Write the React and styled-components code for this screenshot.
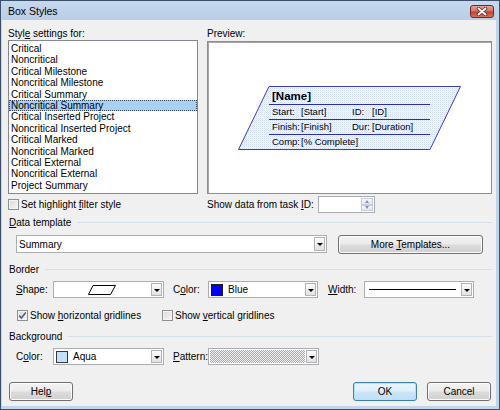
import React from 'react';
import styled, { createGlobalStyle, css } from 'styled-components';

const GlobalStyle = createGlobalStyle`
  html, body { margin: 0; padding: 0; background: #fff; }
  body {
    font-family: "Liberation Sans", Arial, sans-serif;
    font-size: 10px;
    color: #000;
  }
`;

const Window = styled.div`
  width: 500px;
  height: 410px;
  box-sizing: border-box;
  border: 1px solid #3a506b;
  background: #c2d5eb;
  padding: 0 3px 3px 1px;
  display: flex;
  flex-direction: column;
`;

const TitleBar = styled.div`
  height: 19px;
  display: flex;
  align-items: center;
  justify-content: space-between;
  padding: 0 2px 0 6px;
  background: linear-gradient(#c6d8ee, #b9cee7);
`;

const Title = styled.div`
  font-size: 10.5px;
  color: #000;
`;

const CloseButton = styled.div`
  width: 24px;
  height: 13px;
  margin-top: 2px;
  box-sizing: border-box;
  border: 1px solid #6b2b22;
  border-radius: 3px;
  background: linear-gradient(#e3a497 0%, #d27464 45%, #c0432f 55%, #d0785f 100%);
  display: flex;
  align-items: center;
  justify-content: center;
`;

const Body = styled.div`
  flex: 1;
  background: #f0f0f0;
  padding: 7px 4px 0 6px;
  display: flex;
  flex-direction: column;
`;

const TwoCols = styled.div`
  display: grid;
  grid-template-columns: 190px 285px;
  column-gap: 9px;
  margin-top: ${p => p.$mt || 0}px;
  height: ${p => p.$h}px;
`;

const Label = styled.div`
  line-height: 13px;
  white-space: nowrap;
  width: ${p => (p.$w ? `${p.$w}px` : 'auto')};
  padding-left: ${p => p.$pl || 0}px;
  box-sizing: border-box;
  flex-shrink: 0;
`;

const ListBox = styled.div`
  box-sizing: border-box;
  height: 154px;
  border: 1px solid #828790;
  background: #fff;
  padding: 2px 0;
`;

const ListItem = styled.div`
  height: 11.42px;
  line-height: 11.42px;
  padding-left: 2px;
  white-space: nowrap;
  ${p => p.$selected && css`
    background: #a9cff1;
    outline: 1px dotted #33475f;
    outline-offset: -1px;
  `}
`;

const Preview = styled.div`
  box-sizing: border-box;
  height: 153px;
  margin-top: 1px;
  border: 1px solid #8f8f8f;
  box-shadow: inset 1px 1px 0 #a6a6a6;
  background: #fff;
  display: flex;
  align-items: center;
  justify-content: center;
`;

const Node = styled.div`
  position: relative;
  width: 223px;
  height: 64px;
  margin-top: 1px;
`;

const NodeShape = styled.svg`
  position: absolute;
  inset: 0;
`;

const NodeFields = styled.div`
  position: relative;
  display: grid;
  grid-template-columns: 28px 50px 19px auto;
  grid-template-rows: 18px repeat(3, 15px);
  column-gap: 1px;
  padding-left: 34px;
  align-items: center;
  white-space: nowrap;
  font-size: 9.5px;
`;

const NodeName = styled.div`
  grid-column: 1 / -1;
  font-weight: bold;
  font-size: 11.5px;
  margin-top: 1px;
`;

const NodeWide = styled.span`
  grid-column: 2 / -1;
`;

const Row = styled.div`
  display: flex;
  align-items: center;
  margin-top: ${p => p.$mt || 0}px;
  height: ${p => p.$h}px;
  padding-left: ${p => p.$pl || 0}px;
  gap: ${p => p.$gap || 0}px;
`;

const CheckBox = styled.span`
  width: 11px;
  height: 11px;
  box-sizing: border-box;
  border: 1px solid #8e8f8f;
  background: linear-gradient(135deg, #d8d8d8, #f7f7f7);
  box-shadow: inset 0 0 0 1px #f4f4f4;
  display: inline-flex;
  align-items: center;
  justify-content: center;
  flex-shrink: 0;
  margin-right: 2px;
`;

const CheckLabel = styled.label`
  display: flex;
  align-items: center;
  width: ${p => (p.$w ? `${p.$w}px` : 'auto')};
  white-space: nowrap;
`;

const GroupHeader = styled.div`
  display: flex;
  align-items: center;
  height: 13px;
  margin-top: ${p => p.$mt}px;
  padding-left: 1px;
  &::after {
    content: '';
    flex: 1;
    height: 1px;
    margin-left: 6px;
    background: #d5dfe5;
  }
`;

const Combo = styled.div`
  width: ${p => p.$w}px;
  height: ${p => p.$h || 17}px;
  box-sizing: border-box;
  border: 1px solid #abadb3;
  background: #fff;
  display: flex;
  align-items: center;
  flex-shrink: 0;
`;

const ComboValue = styled.div`
  flex: 1;
  min-width: 0;
  height: 100%;
  display: flex;
  align-items: center;
  justify-content: ${p => (p.$center ? 'center' : 'flex-start')};
  gap: 5px;
  padding: 0 ${p => p.$px ?? 2}px;
  ${p => p.$pattern && css`
    margin: 1px 0 1px 1px;
    height: auto;
    align-self: stretch;
    background: repeating-conic-gradient(#a8a8a8 0 25%, #f2f2f2 0 50%) 0 0 / 2px 2px;
  `}
`;

const DropButton = styled.div`
  width: 11px;
  height: ${p => p.$h || 13}px;
  margin: 0 1px;
  box-sizing: border-box;
  border: 1px solid #b3b3b3;
  background: linear-gradient(#fbfbfb, #e2e2e2);
  display: flex;
  align-items: center;
  justify-content: center;
  &::after {
    content: '';
    border-left: 3px solid transparent;
    border-right: 3px solid transparent;
    border-top: 3px solid #000;
    margin-top: 1px;
  }
`;

const Swatch = styled.span`
  width: 12px;
  height: 12px;
  box-sizing: border-box;
  border: 1px solid ${p => p.$edge || '#1a1a1a'};
  background: ${p => p.$color};
  flex-shrink: 0;
`;

const LineSample = styled.span`
  flex: 1;
  height: 1px;
  background: #000;
`;

const Spin = styled.div`
  width: 57px;
  height: 17px;
  box-sizing: border-box;
  border: 1px solid #abadb3;
  background: #fff;
  display: flex;
  justify-content: flex-end;
  padding: 1px;
`;

const SpinButtons = styled.div`
  width: 12px;
  display: flex;
  flex-direction: column;
`;

const SpinHalf = styled.div`
  flex: 1;
  box-sizing: border-box;
  border: 1px solid #c9ced6;
  background: linear-gradient(#f8f9fb, #e3e6ec);
  display: flex;
  align-items: center;
  justify-content: center;
  &::after {
    content: '';
    border-left: 2.5px solid transparent;
    border-right: 2.5px solid transparent;
    ${p => (p.$up
      ? 'border-bottom: 3px solid #8192b3;'
      : 'border-top: 3px solid #8192b3;')}
  }
`;

const Button = styled.button`
  width: ${p => p.$w || 64}px;
  height: 19px;
  box-sizing: border-box;
  padding: 0;
  font: inherit;
  color: #000;
  border: 1px solid #707070;
  border-radius: 3px;
  background: linear-gradient(#f3f3f3 0%, #ebebeb 48%, #dddddd 52%, #cfcfcf 100%);
  box-shadow: inset 0 0 0 1px #fcfcfc;
  flex-shrink: 0;
  ${p => p.$default && css`
    border-color: #3c7fb1;
    box-shadow: inset 0 0 0 1px #b3e3f8;
    background: linear-gradient(#eaf5fc 0%, #dff0fb 48%, #cbe6f8 52%, #c0def3 100%);
  `}
`;

const ButtonRow = styled.div`
  display: flex;
  align-items: center;
  height: 19px;
  margin-top: 17px;
  padding: 0 1px;
  gap: 10px;
`;

const Spacer = styled.div`
  flex: 1;
`;

const items = [
  'Critical',
  'Noncritical',
  'Critical Milestone',
  'Noncritical Milestone',
  'Critical Summary',
  'Noncritical Summary',
  'Critical Inserted Project',
  'Noncritical Inserted Project',
  'Critical Marked',
  'Noncritical Marked',
  'Critical External',
  'Noncritical External',
  'Project Summary',
];

const Check = () => (
  <svg width="9" height="9" viewBox="0 0 9 9">
    <path d="M1.2 4.6 L3.4 7 L7.8 1.4" fill="none" stroke="#4a5f96" strokeWidth="1.6" />
  </svg>
);

const CloseGlyph = () => (
  <svg width="12" height="9" viewBox="0 0 12 9">
    <path d="M2.5 1.5 L9.5 7.5 M9.5 1.5 L2.5 7.5" stroke="#5a1e17" strokeWidth="3.4" strokeLinecap="round" />
    <path d="M2.5 1.5 L9.5 7.5 M9.5 1.5 L2.5 7.5" stroke="#fff" strokeWidth="2" strokeLinecap="round" />
  </svg>
);

const PreviewNode = () => (
  <Node>
    <NodeShape width="223" height="64" viewBox="0 0 223 64">
      <defs>
        <pattern id="dots" width="2" height="2" patternUnits="userSpaceOnUse">
          <rect width="2" height="2" fill="#f6f8fe" />
          <rect width="1" height="1" fill="#cfdaf5" />
          <rect x="1" y="1" width="1" height="1" fill="#e6ecfa" />
        </pattern>
      </defs>
      <polygon points="31,0.5 222.5,0.5 192,63.5 0.5,63.5" fill="url(#dots)" stroke="#3a3ac4" strokeWidth="1" />
      <path d="M31 18.5 H192 M31 33.5 H192 M31 48.5 H192" stroke="#2a2ab8" strokeWidth="1" />
    </NodeShape>
    <NodeFields>
      <NodeName>[Name]</NodeName>
      <span>Start:</span><span>[Start]</span><span>ID:</span><span>[ID]</span>
      <span>Finish:</span><span>[Finish]</span><span>Dur:</span><span>[Duration]</span>
      <span>Comp:</span><NodeWide>[% Complete]</NodeWide>
    </NodeFields>
  </Node>
);

export default function App() {
  return (
    <>
      <GlobalStyle />
      <Window>
        <TitleBar>
          <Title>Box Styles</Title>
          <CloseButton><CloseGlyph /></CloseButton>
        </TitleBar>
        <Body>
          <TwoCols $h={13}>
            <Label>Styl<u>e</u> settings for:</Label>
            <Label>Preview:</Label>
          </TwoCols>
          <TwoCols $h={153}>
            <ListBox>
              {items.map(it => (
                <ListItem key={it} $selected={it === 'Noncritical Summary'}>{it}</ListItem>
              ))}
            </ListBox>
            <Preview>
              <PreviewNode />
            </Preview>
          </TwoCols>

          <TwoCols $h={17} $mt={3}>
            <CheckLabel>
              <CheckBox />
              <span>Set highlight <u>f</u>ilter style</span>
            </CheckLabel>
            <Row $h={17}>
              <Label $w={111}>Show data from task <u>I</u>D:</Label>
              <Spin>
                <SpinButtons>
                  <SpinHalf $up />
                  <SpinHalf />
                </SpinButtons>
              </Spin>
            </Row>
          </TwoCols>

          <GroupHeader $mt={3}><span><u>D</u>ata template</span></GroupHeader>
          <Row $h={18} $mt={6} $pl={8} $gap={11}>
            <Combo $w={311} $h={18}>
              <ComboValue>Summary</ComboValue>
              <DropButton $h={14} />
            </Combo>
            <Button $w={145}>More <u>T</u>emplates...</Button>
          </Row>

          <GroupHeader $mt={10}>Border</GroupHeader>
          <Row $h={17} $mt={5} $pl={8}>
            <Label $w={37}><u>S</u>hape:</Label>
            <Combo $w={111}>
              <ComboValue $center>
                <svg width="28" height="10" viewBox="0 0 28 10">
                  <polygon points="5,0.5 27.5,0.5 22.5,9.5 0.5,9.5" fill="none" stroke="#000" strokeWidth="1" />
                </svg>
              </ComboValue>
              <DropButton />
            </Combo>
            <Label $w={44} $pl={9}>C<u>o</u>lor:</Label>
            <Combo $w={110}>
              <ComboValue>
                <Swatch $color="#0000ff" />
                <span>Blue</span>
              </ComboValue>
              <DropButton />
            </Combo>
            <Label $w={46} $pl={10}><u>W</u>idth:</Label>
            <Combo $w={110}>
              <ComboValue $px={4}>
                <LineSample />
              </ComboValue>
              <DropButton />
            </Combo>
          </Row>

          <Row $h={13} $mt={11} $pl={9}>
            <CheckLabel $w={145}>
              <CheckBox><Check /></CheckBox>
              <span>Show <u>h</u>orizontal gridlines</span>
            </CheckLabel>
            <CheckLabel>
              <CheckBox />
              <span>Show <u>v</u>ertical gridlines</span>
            </CheckLabel>
          </Row>

          <GroupHeader $mt={8}>Background</GroupHeader>
          <Row $h={17} $mt={5} $pl={8}>
            <Label $w={37}>C<u>o</u>lor:</Label>
            <Combo $w={111}>
              <ComboValue>
                <Swatch $color="#c4dff8" $edge="#3a3a3a" />
                <span>Aqua</span>
              </ComboValue>
              <DropButton />
            </Combo>
            <Label $w={44} $pl={9}><u>P</u>attern:</Label>
            <Combo $w={111}>
              <ComboValue $pattern />
              <DropButton />
            </Combo>
          </Row>

          <ButtonRow>
            <Button>Hel<u>p</u></Button>
            <Spacer />
            <Button $default>OK</Button>
            <Button>Cancel</Button>
          </ButtonRow>
        </Body>
      </Window>
    </>
  );
}
